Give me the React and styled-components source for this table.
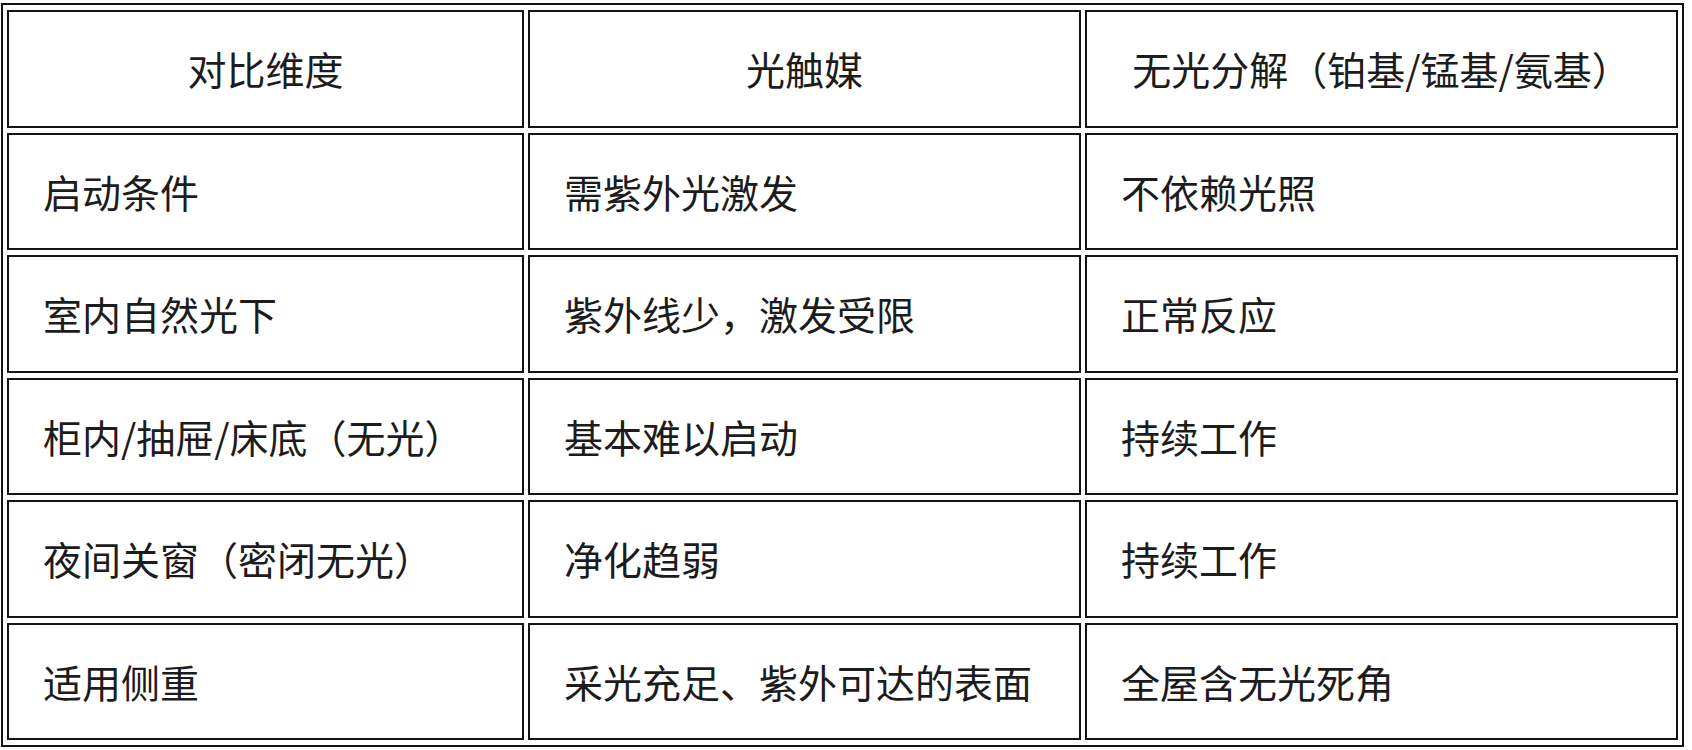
import styled, { createGlobalStyle } from 'styled-components'

const GlobalStyle = createGlobalStyle`
  html, body {
    margin: 0;
    padding: 0;
    background: #ffffff;
  }
`

const Table = styled.table`
  margin: 3px 1px 1px;
  width: 1683px;
  height: 744px;
  border: 2px solid #141414;
  border-collapse: separate;
  border-spacing: 4px 5px;
  table-layout: fixed;
  font-family: 'Noto Sans CJK SC', 'Noto Sans', sans-serif;
  font-size: 39px;
  color: #1c1c1c;
`

const Cell = styled.td`
  border: 2px solid #141414;
  padding: 0 0 0 ${(p) => (p.$head ? '0' : '34px')};
  text-align: ${(p) => (p.$head ? 'center' : 'left')};
  vertical-align: middle;
  white-space: nowrap;
  font-weight: 400;
  line-height: 1;
`

const widths = ['517px', '553px', '593px']

const header = ['对比维度', '光触媒', '无光分解（铂基/锰基/氨基）']

const rows = [
  ['启动条件', '需紫外光激发', '不依赖光照'],
  ['室内自然光下', '紫外线少，激发受限', '正常反应'],
  ['柜内/抽屉/床底（无光）', '基本难以启动', '持续工作'],
  ['夜间关窗（密闭无光）', '净化趋弱', '持续工作'],
  ['适用侧重', '采光充足、紫外可达的表面', '全屋含无光死角'],
]

function App() {
  return (
    <>
      <GlobalStyle />
      <Table>
        <colgroup>
          {widths.map((w, i) => (
            <col key={i} style={{ width: w }} />
          ))}
        </colgroup>
        <tbody>
          <tr>
            {header.map((h, i) => (
              <Cell key={i} $head>
                {h}
              </Cell>
            ))}
          </tr>
          {rows.map((row, r) => (
            <tr key={r}>
              {row.map((c, i) => (
                <Cell key={i}>{c}</Cell>
              ))}
            </tr>
          ))}
        </tbody>
      </Table>
    </>
  )
}

export default App
